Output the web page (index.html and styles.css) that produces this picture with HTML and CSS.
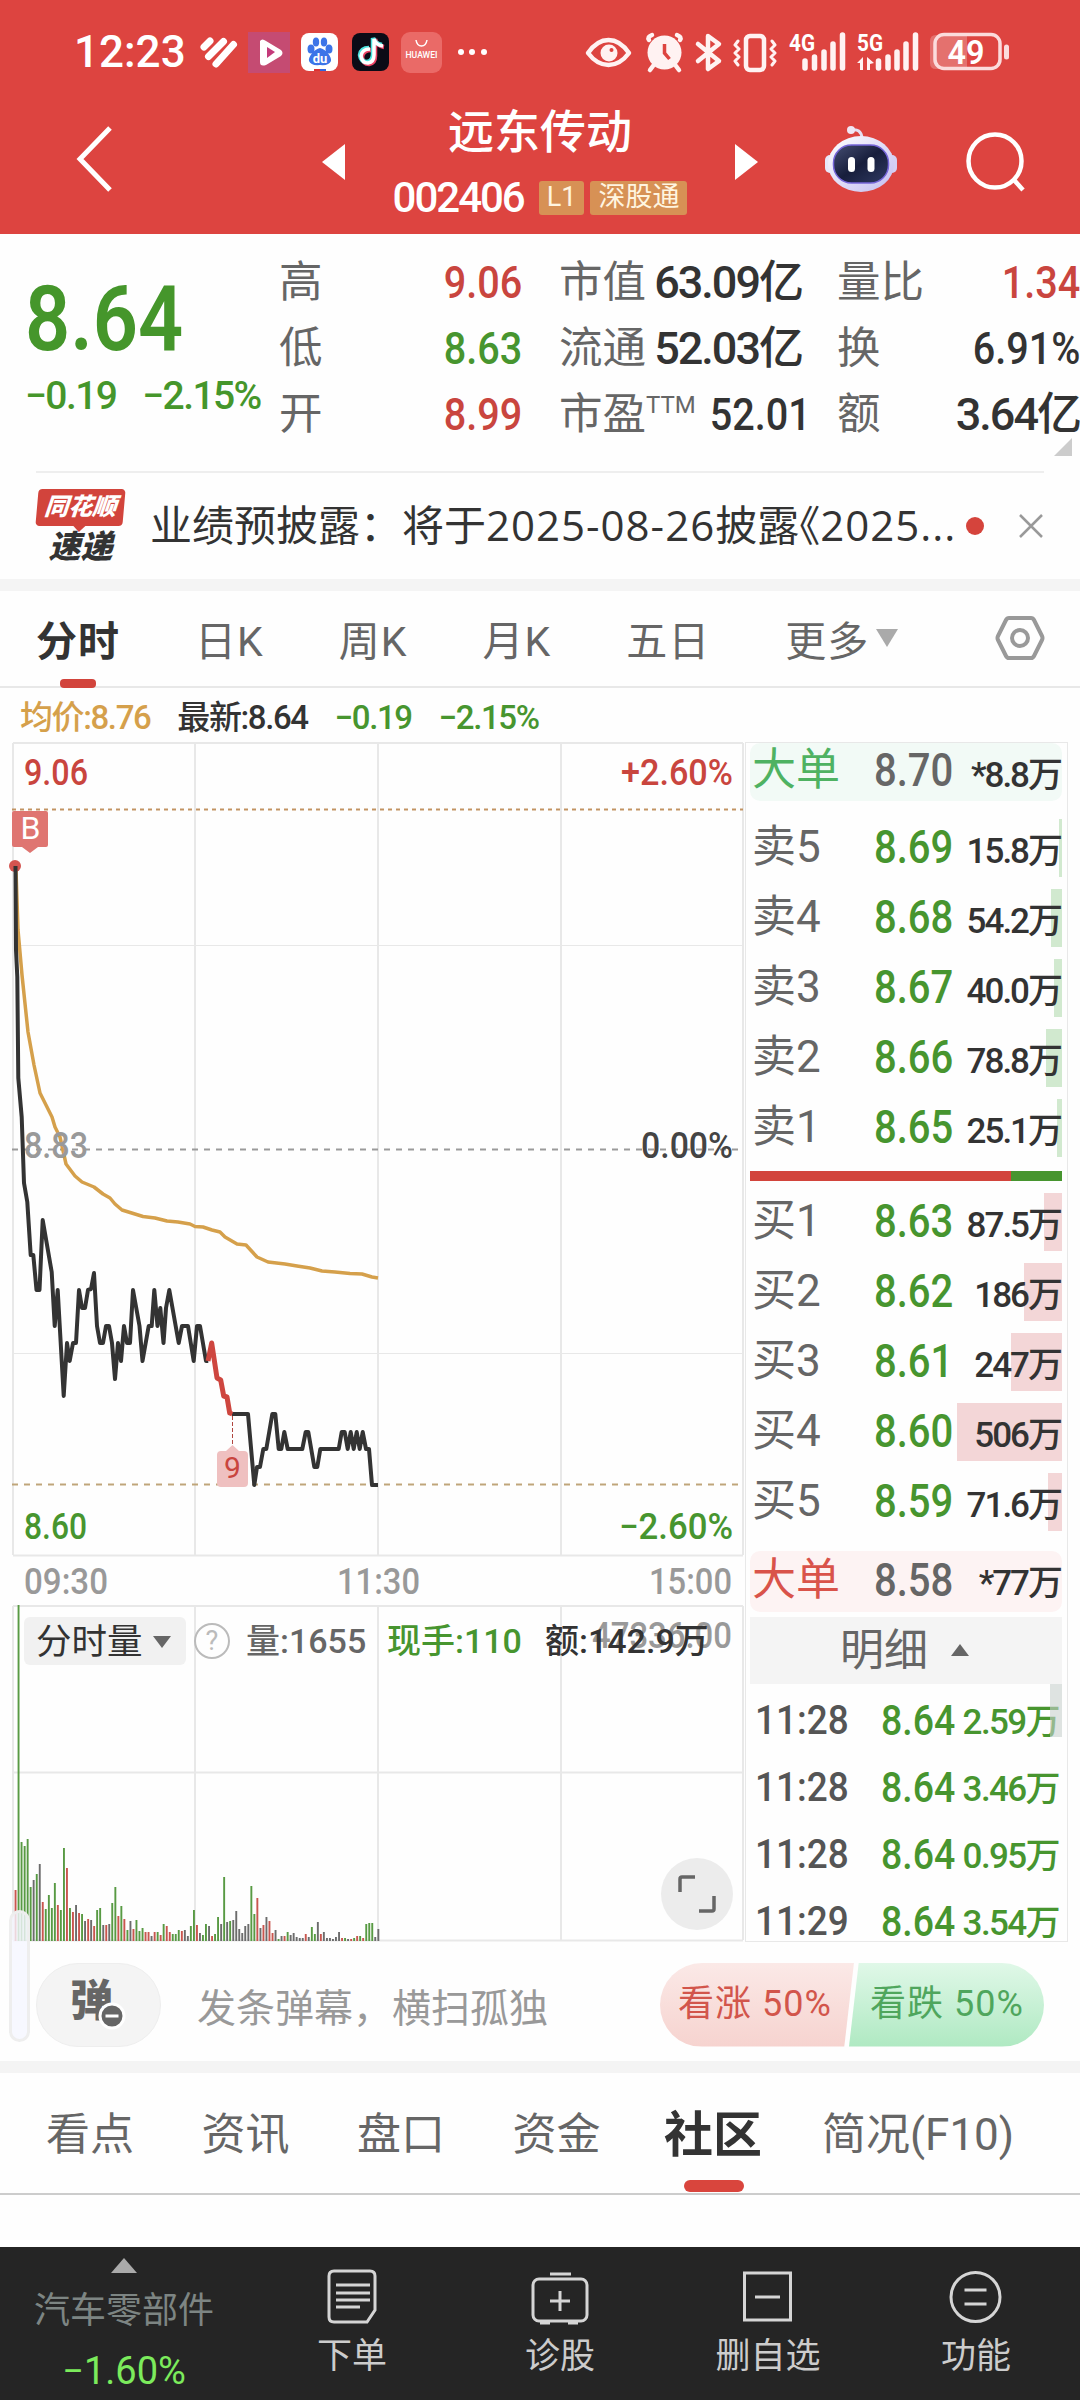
FILE: index.html
```
<!DOCTYPE html>
<html lang="zh-CN">
<head>
    <meta charset="UTF-8">
    <meta name="viewport" content="width=device-width, initial-scale=1.0">
    <title>远东传动 002406</title>
    <link rel="stylesheet" href="styles.css">
</head>
<body>
<div class="app">
    <header class="header">
        <div class="status">
            <span class="clock">12:23</span>
            <svg class="status-left" width="294" height="46" viewBox="198 28 294 46">
                <path d="M204 46L210 40M208.500 55.500L223.500 40.500M216 63L233.500 43.500" fill="none" stroke="#fff" stroke-width="7" stroke-linecap="round"/>
                <rect x="248" y="31" width="42" height="41" fill="#c54b72"/>
                <path d="M260 40 Q262 37 266 40 L281 49 Q284 52 281 55 L266 64 Q260 66 260 61Z" fill="#fff"/>
                <path d="M267 46 L275 51 L267 57Z" fill="#c43a7a"/>
                <rect x="301" y="32" width="37" height="38" rx="8" fill="#fff"/>
                <g fill="#3c74e8">
                    <ellipse cx="311" cy="48" rx="3.5" ry="4.5"/>
                    <ellipse cx="316" cy="41" rx="3.2" ry="4.5"/>
                    <ellipse cx="324" cy="41" rx="3.2" ry="4.5"/>
                    <ellipse cx="329" cy="48" rx="3.5" ry="4.5"/>
                    <path d="M320 47 C326 48 332 56 331 60 Q329 65 320 64 Q311 65 309 60 C308 56 314 48 320 47Z"/>
                </g>
                <text x="320" y="62" class="du">du</text>
                <path d="M314 68h6v2h-6z" fill="#d33"/><path d="M320 68h6v2h-6z" fill="#36d"/>
                <rect x="352" y="32" width="37" height="38" rx="8" fill="#0b0b16"/>
                <g fill="none" stroke-width="4.5">
                    <path d="M371 49 Q363 49 362 56 Q363 63 369 63 Q375 62 375 55 V38 Q377 45 384 46" stroke="#ee4466"/>
                    <path d="M369 47 Q361 47 360 54 Q361 61 367 61 Q373 60 373 53 V37 Q375 43 382 44" stroke="#4de3df"/>
                    <path d="M370 48 Q362 48 361 55 Q362 62 368 62 Q374 61 374 54 V38 Q376 44 383 45" stroke="#fff" stroke-width="3.5"/>
                </g>
                <rect x="401" y="31" width="41" height="41" rx="9" fill="#ea6a67"/>
                <path d="M416 39 Q417 45 421.500 45 Q426 45 427 39" fill="none" stroke="#fff" stroke-width="1.500"/>
                <text x="421.500" y="57" class="huawei" textLength="32" lengthAdjust="spacingAndGlyphs">HUAWEI</text>
                <g fill="#fff"><circle cx="461" cy="51" r="3"/><circle cx="472" cy="51" r="3"/><circle cx="484" cy="51" r="3"/></g>
            </svg>
            <svg class="status-right" width="426" height="48" viewBox="585 27 426 48">
                <g fill="none" stroke="#fff2f2" stroke-width="4.500" stroke-linecap="round" stroke-linejoin="round">
                    <path d="M588 52 Q597 39 608.500 39 Q620 39 629 52 Q620 64 608.500 64 Q597 64 588 52Z"/>
                    <path d="M698 43 L719 60 L708 68 V35 L719 43 L698 60"/>
                    <rect x="746" y="35" width="18" height="34" rx="4"/>
                    <path d="M738 40l-3 4 4 4-4 4 4 4-4 4 3 4M772 40l3 4-4 4 4 4-4 4 4 4-3 4" stroke-width="3"/>
                    <path d="M649 39 Q647 36 652 34M680 39 Q682 36 677 34M653 65l-3 4M676 65l3 4"/>
                </g>
                <circle cx="609" cy="52" r="8.500" fill="#fff2f2"/><circle cx="611.500" cy="49" r="2" fill="#dd4440"/>
                <circle cx="664.500" cy="51.500" r="17" fill="#fff2f2"/>
                <path d="M664.500 43v9l5 6" fill="none" stroke="#dd4440" stroke-width="3.500"/>
                <text x="789" y="50" class="net" textLength="26" lengthAdjust="spacingAndGlyphs">4G</text>
                <text x="857" y="50" class="net" textLength="26" lengthAdjust="spacingAndGlyphs">5G</text>
                <path d="M805 60v7M814.500 56v11M824 51v16M833 43v24M842.500 34v33M878.500 60v7M888 56v11M897 51v16M906 43v24M915.500 34v33" stroke="#fff2f2" stroke-width="5.500" stroke-linecap="round"/>
                <path d="M857 62l6-6v13h-3v-7zM867 56l7 6-4 1v6h-3z" fill="#fff2f2"/>
                <path d="M936 34h31v34h-31q-6 0-6-6v-22q0-6 6-6z" fill="#e4716e"/>
                <rect x="935" y="33.500" width="65" height="34" rx="9" fill="none" stroke="#fbdcdc" stroke-width="3.500"/>
                <path d="M1006.500 46v10" stroke="#fbdcdc" stroke-width="5" stroke-linecap="round"/>
                <text x="966" y="63" class="batt" textLength="37" lengthAdjust="spacingAndGlyphs">49</text>
            </svg>
        </div>
        <div class="titlebar">
            <svg class="back" width="40" height="70" viewBox="0 0 40 70"><path d="M36 4 L6 35 L36 66"/></svg>
            <i class="tri-left"></i>
            <div class="title">
                <h1>远东传动</h1>
                <div class="code"><span>002406</span><b>L1</b><b>深股通</b></div>
            </div>
            <i class="tri-right"></i>
            <svg class="robot" width="74" height="68" viewBox="824 125 74 68">
                <defs>
                    <linearGradient id="shell" x1="0" y1="0" x2="1" y2="1"><stop offset="0" stop-color="#fff"/><stop offset="1" stop-color="#c3bdf0"/></linearGradient>
                    <linearGradient id="face" x1="0" y1="0" x2="1" y2="1"><stop offset="0" stop-color="#454e72"/><stop offset=".5" stop-color="#171e3c"/><stop offset="1" stop-color="#303a62"/></linearGradient>
                </defs>
                <path d="M851 130 Q861 128 862 138" fill="none" stroke="#e6dff2" stroke-width="3"/>
                <circle cx="851" cy="130" r="4" fill="#f0e6f4"/>
                <rect x="825" y="155" width="12" height="18" rx="5" fill="#e8e8fa"/>
                <rect x="885" y="155" width="12" height="18" rx="5" fill="#d5d0f3"/>
                <ellipse cx="861" cy="164" rx="33" ry="28" fill="url(#shell)"/>
                <rect x="833.500" y="145" width="55" height="38" rx="18" fill="url(#face)" stroke="#7565d8" stroke-width="1.500"/>
                <rect x="848" y="157" width="7" height="15" rx="3.500" fill="#fff"/><rect x="867.500" y="157" width="7" height="15" rx="3.500" fill="#fff"/>
            </svg>
            <svg class="search" width="60" height="60" viewBox="0 0 60 60"><circle cx="29" cy="29" r="26.500"/><path d="M48 48 L57 58"/></svg>
        </div>
    </header>

    <section class="quote">
        <div class="price">
            <div class="last">8.64</div>
            <div class="change"><span>−0.19</span><span>−2.15%</span></div>
        </div>
        <dl class="col col-a">
            <div><dt>高</dt><dd class="n red">9.06</dd></div>
            <div><dt>低</dt><dd class="n green">8.63</dd></div>
            <div><dt>开</dt><dd class="n red">8.99</dd></div>
        </dl>
        <dl class="col col-b">
            <div><dt>市值</dt><dd>63.09亿</dd></div>
            <div><dt>流通</dt><dd>52.03亿</dd></div>
            <div><dt>市盈<sup>TTM</sup></dt><dd class="n">52.01</dd></div>
        </dl>
        <dl class="col col-c">
            <div><dt>量比</dt><dd class="n red">1.34</dd></div>
            <div><dt>换</dt><dd class="n">6.91%</dd></div>
            <div><dt>额</dt><dd>3.64亿</dd></div>
        </dl>
        <i class="corner"></i>
    </section>

    <section class="news">
        <div class="news-logo">
            <span class="logo-top">同花顺</span>
            <span class="logo-bottom">速递</span>
        </div>
        <p>业绩预披露：将于<span class="lat">2025-08-26</span>披露<span class="quote-mark">《</span><span class="lat">2025...</span></p>
        <i class="dot"></i>
        <svg class="close" width="26" height="26" viewBox="0 0 26 26"><path d="M2 2L24 24M24 2L2 24"/></svg>
    </section>

    <nav class="periods">
        <span class="on">分时</span><span>日K</span><span>周K</span><span>月K</span><span>五日</span><span class="more">更多<i></i></span>
        <svg width="50" height="46" viewBox="0 0 50 46"><path d="M14 3h22q2 0 3 2l8 16q1 2 0 4l-8 16q-1 2-3 2h-22q-2 0-3-2l-8-16q-1-2 0-4l8-16q1-2 3-2z"/><circle cx="25" cy="23" r="8"/></svg>
    </nav>

    <div class="legend">
        <span class="gold">均价:8.76</span><span>最新:8.64</span><span class="green">−0.19</span><span class="green">−2.15%</span>
    </div>

    <main class="market">
        <div class="charts">
            <svg width="745" height="1200" viewBox="0 742 745 1200">
                <g class="grid">
                    <path d="M13 743H743M13 1555.500H743M13 1606H743M13 1772.500H743M13 1940.500H743"/>
                    <path d="M13 945.500H743M13 1353.500H743" stroke-width="1"/>
                    <path d="M13 743V1555M195 743V1555M378 743V1555M561 743V1555M743 743V1555"/>
                    <path d="M13 1606V1940M195 1606V1940M378 1606V1940M561 1606V1940M743 1606V1940"/>
                </g>
                <path d="M12 809.500H743" stroke="#c29362" stroke-width="2" stroke-dasharray="4 4"/>
                <path d="M12 1149.500H743" stroke="#9a9a9a" stroke-width="2" stroke-dasharray="6 6"/>
                <path d="M12 1484.500H743" stroke="#bfa57a" stroke-width="2" stroke-dasharray="6 6"/>
                <polyline class="avg" points="16,870 18,930 22,975 28,1032 34,1065 40,1093 46,1105 52,1117 55,1127 60,1137 66,1164 75,1176 82,1182 94,1187 103,1194 110,1198 115,1204 122,1210 143,1216.500 155,1218 167,1221 178,1222 190,1224 195,1226.500 203,1227 212,1230 220,1232 225,1237 237,1244 246,1245 257,1257 268,1262 285,1264 297,1266 310,1268 322,1271 335,1272 350,1273.500 362,1274 372,1277 378,1278"/>
                <circle cx="15" cy="866" r="6" fill="#d45450"/>
                <polyline class="line" points="15.500,866 16,950 17.300,977 18.300,1078 21.700,1117 24,1183 27.300,1202 30.700,1255 33.300,1255 36.500,1290 39.500,1290 42.700,1220 51.700,1272 54.700,1326 57.700,1290 63.700,1396 67,1343 69.700,1361 73,1343 76,1343 79,1290 82,1308 85,1308 88,1290 91,1289 94,1273 97,1326 100,1343 103,1343 106,1326 109,1326 112,1343 115,1379 118,1343 121,1361 124,1326 127,1343 130,1343 133,1290 139.500,1326 142.500,1361 148.700,1326 151.700,1326 154.300,1290 157.500,1326 160.300,1308 163.500,1343 166,1308 169.300,1290 178.700,1343 182,1326 188,1326 193.700,1361 197,1326 200,1326 206,1361 208.300,1361"/>
                <polyline class="line" points="232,1414 248,1414 254.300,1485 257,1467 260,1467 263.300,1449 266.300,1449 272.300,1414 275.300,1414 278.700,1449 281.300,1449 284.300,1432 287.700,1449 302.300,1449 305.700,1432 308.300,1432 314.300,1467 317.300,1467 320.300,1449 338.700,1449 341.700,1432 344.700,1432 347.700,1449 350.700,1432 353.700,1449 356.700,1432 359.700,1449 362.700,1432 366,1449 369,1449 372,1485 378,1485"/>
                <polyline class="line drop" points="208,1361 211.700,1343 217,1378 220.700,1380 223.700,1396 227,1397 229.700,1413 232.300,1414"/>
                <path d="M232.500 1416V1444" stroke="#b0453f" stroke-width="1" stroke-dasharray="4 2"/>
                <path d="M221 1451h5l6.500-6 6.500 6h5q4 0 4 4v28q0 4-4 4h-23q-4 0-4-4v-28q0-4 4-4z" fill="#efc0c0"/>
                <text x="232.500" y="1478" class="mark9">9</text>
                <path d="M14 811h32q2 0 2 2v32q0 2-2 2h-8l-8 6-8-6h-8q-2 0-2-2v-32q0-2 2-2z" fill="#df7571"/>
                <text x="30.500" y="839" class="mark-b">B</text>
                <text class="ax red" x="24" y="785" textLength="64" lengthAdjust="spacingAndGlyphs">9.06</text>
                <text class="ax grey" x="24" y="1158" textLength="64" lengthAdjust="spacingAndGlyphs">8.83</text>
                <text class="ax green" x="24" y="1539" textLength="63" lengthAdjust="spacingAndGlyphs">8.60</text>
                <text class="ax red" x="621" y="785" textLength="112" lengthAdjust="spacingAndGlyphs">+2.60%</text>
                <text class="ax dark" x="641" y="1158" textLength="92" lengthAdjust="spacingAndGlyphs">0.00%</text>
                <text class="ax green" x="619" y="1539" textLength="114" lengthAdjust="spacingAndGlyphs">−2.60%</text>
                <text class="ax grey" x="24" y="1594" textLength="84" lengthAdjust="spacingAndGlyphs">09:30</text>
                <text class="ax grey" x="337" y="1594" textLength="83" lengthAdjust="spacingAndGlyphs">11:30</text>
                <text class="ax grey" x="649" y="1594" textLength="83" lengthAdjust="spacingAndGlyphs">15:00</text>
                <text class="ax grey" x="592" y="1648" textLength="140" lengthAdjust="spacingAndGlyphs">47336.00</text>
                <g id="volume"></g>
            </svg>
            <div class="vol-bar">
                <span class="pick">分时量<i></i></span><span class="help">?</span>
                <span class="v1">量:1655</span><span class="v2 green">现手:110</span><span class="v3">额:142.9万</span>
            </div>
            <div class="expand"><svg width="38" height="38" viewBox="0 0 38 38"><path d="M2 17V4q0-2 2-2h13M36 21v13q0 2-2 2H21"/></svg></div>
        </div>

        <aside class="book">
            <div class="row big sell"><span>大单</span><b>8.70</b><em>*8.8万</em></div>
            <div class="levels">
                <div class="row s"><span>卖5</span><b>8.69</b><em>15.8万</em><i style="width:3px"></i></div>
                <div class="row s"><span>卖4</span><b>8.68</b><em>54.2万</em><i style="width:11px"></i></div>
                <div class="row s"><span>卖3</span><b>8.67</b><em>40.0万</em><i style="width:8px"></i></div>
                <div class="row s"><span>卖2</span><b>8.66</b><em>78.8万</em><i style="width:16px"></i></div>
                <div class="row s"><span>卖1</span><b>8.65</b><em>25.1万</em><i style="width:5px"></i></div>
            </div>
            <div class="ratio"><i style="width:261px"></i></div>
            <div class="levels">
                <div class="row"><span>买1</span><b>8.63</b><em>87.5万</em><i style="width:18px"></i></div>
                <div class="row"><span>买2</span><b>8.62</b><em>186万</em><i style="width:38px"></i></div>
                <div class="row"><span>买3</span><b>8.61</b><em>247万</em><i style="width:51px"></i></div>
                <div class="row"><span>买4</span><b>8.60</b><em>506万</em><i style="width:105px"></i></div>
                <div class="row"><span>买5</span><b>8.59</b><em>71.6万</em><i style="width:14px"></i></div>
            </div>
            <div class="row big buy"><span>大单</span><b>8.58</b><em>*77万</em></div>
            <div class="detail-head">明细<i></i></div>
            <div class="details">
                <div><span>11:28</span><b>8.64</b><em>2.59万</em></div>
                <div><span>11:28</span><b>8.64</b><em>3.46万</em></div>
                <div><span>11:28</span><b>8.64</b><em>0.95万</em></div>
                <div><span>11:29</span><b>8.64</b><em>3.54万</em></div>
                <i class="thumb"></i>
            </div>
        </aside>
    </main>

    <section class="danmu">
        <i class="handle"></i>
        <div class="toggle">弹<svg width="28" height="28" viewBox="0 0 28 28"><circle cx="14" cy="14" r="12"/><path d="M7.500 14h13"/></svg></div>
        <span class="hint">发条弹幕，横扫孤独</span>
        <div class="vote"><span class="up">看涨 50%</span><span class="down">看跌 50%</span></div>
    </section>

    <nav class="pages">
        <span>看点</span><span>资讯</span><span>盘口</span><span>资金</span><span class="on">社区</span><span>简况(F10)</span>
    </nav>

    <footer class="bottom">
        <div class="sector"><i></i><span>汽车零部件</span><b>−1.60%</b></div>
        <div class="item">
            <svg width="60" height="60" viewBox="0 0 60 60"><path d="M12 5h36q5 0 5 5v34l-8 12H12q-5 0-5-5V10q0-5 5-5z"/><path d="M14 19h34M14 27h34M14 34h34M14 41h24"/></svg>
            <span>下单</span>
        </div>
        <div class="item">
            <svg width="60" height="60" viewBox="0 0 60 60"><rect x="3" y="13" width="54" height="42" rx="6"/><path d="M20 8h21M30 25v20M20 35h20M10 57h10M38 57h10"/></svg>
            <span>诊股</span>
        </div>
        <div class="item">
            <svg width="60" height="60" viewBox="0 0 60 60"><rect x="6.500" y="7" width="46" height="47"/><path d="M17 31h25"/></svg>
            <span>删自选</span>
        </div>
        <div class="item">
            <svg width="60" height="60" viewBox="0 0 60 60"><circle cx="29.500" cy="31" r="24.500"/><path d="M18.500 24h22M18.500 38h22"/></svg>
            <span>功能</span>
        </div>
    </footer>
</div>

<script>
    // g = down minute, r = up minute, k = flat
    const volumes = "r51 g336 g99 g95 g102 g54 k61 g67 k77 r39 g32 g46 g33 g58 r36 g31 g93 r73 g33 r29 k36 r28 g27 k20 r22 k21 r15 g31 g33 k16 r16 k17 g38 g54 r25 g35 r22 g11 k20 r12 g21 g10 g13 r9 r9 k5 r9 g9 r6 g17 r15 r9 g7 g7 g11 r10 k11 k5 g15 g31 r16 k8 g6 g17 k15 r5 g7 g24 k17 g64 k19 g20 k21 k30 k12 k8 k15 k17 g55 g27 r43 k13 r16 k24 r20 r8 k11 g2 k5 r5 g9 k6 k8 k4 k3 k3 r7 k4 g14 g7 k19 r7 k9 k3 k3 k2 k4 k9 r3 g3 k2 r2 g3 r5 g5 r3 g17 g18 g18 k4 k12";
    const colors = { g: "#589a43", r: "#c9564f", k: "#6c6c6c" };
    document.getElementById("volume").innerHTML = volumes.split(" ").map((v, i) => {
        const h = Number(v.slice(1));
        return `<rect x="${(14.6 + i * 3.023).toFixed(1)}" y="${1941 - h}" width="1.9" height="${h}" fill="${colors[v[0]]}"/>`;
    }).join("");
</script>
</body>
</html>
```
FILE: styles.css
```
* {
    box-sizing: border-box;
}
body, h1, p, dl, dd {
    margin: 0;
}
body {
    width: 1080px;
    background: #fefefe;
    color: #333;
    font-family: Roboto, "Noto Sans CJK SC", sans-serif;
}
i, em {
    font-style: normal;
}
b {
    font-weight: 500;
}
span, b, em, dt, dd, p {
    white-space: nowrap;
}
.app {
    width: 1080px;
    height: 2400px;
    overflow: hidden;
    display: flex;
    flex-direction: column;
}
.red { color: #c9453e; fill: #c9453e; }
.green { color: #47952f; fill: #47952f; }
.grey { fill: #999; }
.dark { fill: #444; }
.gold { color: #d5a04b; }

/* header */
.header {
    height: 234px;
    background: #dd4440;
    color: #fff;
}
.status {
    height: 104px;
    display: flex;
    align-items: center;
    padding: 0 69px 0 74px;
}
.clock {
    width: 124px;
    font-size: 44px;
    font-weight: 500;
}
.status-right {
    margin-left: auto;
}
.status text {
    text-anchor: middle;
    fill: #fff;
}
.status text.net {
    font-size: 24px;
    font-weight: 700;
    text-anchor: start;
}
.status text.batt {
    font-size: 34px;
    font-weight: 600;
}
.du { font-size: 13px; font-weight: 700; }
.huawei { font-size: 9px; font-weight: 500; }
.titlebar {
    height: 130px;
    display: flex;
    align-items: flex-start;
    padding-left: 74px;
}
.titlebar svg, .titlebar i {
    flex: none;
}
.back {
    margin-top: 20px;
    margin-right: 208px;
    fill: none;
    stroke: #fff;
    stroke-width: 5;
}
.tri-left, .tri-right {
    margin-top: 40px;
    border: 18px solid transparent;
}
.tri-left {
    border-left: 0;
    border-right: 23px solid #fff;
}
.tri-right {
    border-right: 0;
    border-left: 23px solid #fff;
}
.title {
    width: 390px;
    text-align: center;
}
.title h1 {
    margin-top: -5px;
    font-size: 46px;
    font-weight: 500;
    line-height: 66px;
}
.code {
    display: flex;
    justify-content: center;
    align-items: center;
    height: 66px;
    line-height: 66px;
    font-size: 42px;
    font-weight: 500;
}
.code span {
    margin-right: 15px;
    letter-spacing: -2px;
}
.code b {
    height: 34px;
    padding: 0 8px;
    margin-right: 6px;
    border-radius: 3px;
    background: #d79155;
    color: #fff5e0;
    font-size: 27px;
    font-weight: 400;
    line-height: 33px;
}
.code b:last-child {
    margin-right: 0;
}
.robot {
    margin: 21px 68px 0 66px;
}
.search {
    margin-top: 28px;
    fill: none;
    stroke: #fff;
    stroke-width: 4.5;
}

/* quote */
.quote {
    position: relative;
    height: 237px;
    display: flex;
    padding: 15px 0 0 25px;
}
.price {
    width: 254px;
}
.last {
    margin-top: 21px;
    font-size: 91px;
    font-weight: 600;
    line-height: 98px;
    color: #45962b;
    transform: scaleX(.87);
    transform-origin: left;
}
.change {
    display: flex;
    gap: 26px;
    color: #45962b;
    font-size: 39px;
    font-weight: 500;
    line-height: 56px;
    letter-spacing: -1.6px;
}
.col > div {
    display: flex;
    justify-content: space-between;
    height: 66px;
    line-height: 68px;
    font-size: 43.5px;
}
.col dt {
    color: #666;
}
.col dd {
    font-size: 45px;
    font-weight: 500;
    letter-spacing: -2px;
}
/* narrow digits */
.col dd.n {
    letter-spacing: 0;
    transform: scaleX(.88);
    transform-origin: right;
}
.col-a { width: 243px; }
.col-b { width: 243px; margin-left: 37px; }
.col-c { width: 243px; margin-left: 35px; }
.col sup {
    font-size: 24px;
    line-height: 0;
    vertical-align: 16px;
}
.corner {
    position: absolute;
    right: 8px;
    bottom: 15px;
    border-left: 18px solid transparent;
    border-bottom: 18px solid #ccc;
}

/* news */
.news {
    height: 108px;
    margin: 0 36px;
    border-top: 2px solid #eee;
    display: flex;
    align-items: center;
}
.news-logo {
    width: 87px;
    margin: 0 26px 0 1px;
    font-style: italic;
    font-weight: 900;
    text-align: center;
    flex: none;
}
.logo-top {
    position: relative;
    display: block;
    height: 37px;
    border-radius: 4px;
    background: #d2443c;
    color: #fff;
    font-size: 24px;
    line-height: 36px;
    transform: skewX(-5deg);
}
.logo-top::after {
    content: "";
    position: absolute;
    left: 38px;
    top: 37px;
    border: 6px solid transparent;
    border-top-color: #d2443c;
    border-bottom: 0;
}
.logo-bottom {
    display: block;
    margin-top: 4px;
    font-size: 32px;
    line-height: 34px;
}
.news p {
    width: 806px;
    font-size: 42px;
    line-height: 60px;
}
.lat {
    font-family: "Open Sans", sans-serif;
    letter-spacing: 1px;
    font-size: 42px;
}
.quote-mark {
    margin-left: -21px;
}
.dot {
    width: 18px;
    height: 18px;
    margin-left: 10px;
    border-radius: 9px;
    background: #d5443c;
}
.close {
    margin-left: auto;
    fill: none;
    stroke: #999;
    stroke-width: 2.5;
}

/* period tabs */
.periods {
    height: 109px;
    border-top: 12px solid #f4f4f4;
    border-bottom: 2px solid #e8e8e8;
    display: flex;
    align-items: center;
    padding: 0 35px 2px 36px;
    font-size: 41px;
    color: #666;
}
.periods span {
    margin-right: 75px;
    letter-spacing: 1px;
}
.periods .on {
    position: relative;
    color: #333;
    font-weight: 700;
}
.periods .on::after {
    content: "";
    position: absolute;
    left: 24px;
    bottom: -20px;
    width: 36px;
    height: 9px;
    border-radius: 4px;
    background: #d2443c;
}
.periods .more {
    display: flex;
    align-items: center;
    margin: 0;
}
.more i {
    margin-left: 7px;
    border: 11px solid transparent;
    border-top: 18px solid #aaa;
    border-bottom: 0;
}
.periods svg {
    margin-left: auto;
    fill: none;
    stroke: #999;
    stroke-width: 4;
}

.legend {
    height: 54px;
    display: flex;
    padding-left: 20px;
    gap: 27px;
    font-size: 33px;
    font-weight: 500;
    line-height: 59px;
    letter-spacing: -1.4px;
}

/* market */
.market {
    height: 1200px;
    display: flex;
}
.charts {
    position: relative;
    width: 745px;
    flex: none;
}
.charts > svg {
    display: block;
}
.grid {
    fill: none;
    stroke: #e8e8e8;
    stroke-width: 2;
}
.avg, .line {
    fill: none;
    stroke: #d5a04b;
    stroke-width: 3.5;
    stroke-linejoin: round;
}
.line {
    stroke: #333;
    stroke-width: 4;
}
.line.drop {
    stroke: #ce463f;
    stroke-width: 5;
}
.ax {
    font-size: 36px;
    font-weight: 500;
}
.mark9, .mark-b {
    font-size: 30px;
    text-anchor: middle;
    fill: #c9453e;
}
.mark-b {
    font-size: 32px;
    fill: #fff;
}
.vol-bar {
    position: absolute;
    left: 24px;
    top: 875px;
    display: flex;
    align-items: center;
    height: 48px;
    font-size: 34px;
    font-weight: 500;
    line-height: 50px;
}
.pick {
    width: 162px;
    height: 48px;
    padding-left: 12px;
    border-radius: 6px;
    background: #f1f1f1;
    font-size: 35.5px;
    font-weight: 400;
}
.pick i {
    display: inline-block;
    margin: 0 0 6px 10px;
    border: 9px solid transparent;
    border-top: 12px solid #666;
    border-bottom: 0;
}
.help {
    width: 36px;
    height: 36px;
    margin: 0 16px 0 8px;
    border: 2px solid #bbb;
    border-radius: 18px;
    color: #bbb;
    font-size: 27px;
    font-weight: 400;
    line-height: 33px;
    text-align: center;
}
.v1 {
    width: 141px;
    color: #666;
}
.v2 {
    width: 158px;
}
.expand {
    position: absolute;
    left: 661px;
    top: 1116px;
    width: 72px;
    height: 72px;
    border-radius: 36px;
    background: #ececec;
    display: flex;
    align-items: center;
    justify-content: center;
    fill: none;
    stroke: #666;
    stroke-width: 3.5;
}

/* order book */
.book {
    width: 323px;
    border: 1px solid #e8e8e8;
    padding: 0 5px 0 4px;
}
.row, .details > div {
    position: relative;
    display: grid;
    grid-template-columns: 122px 1fr auto;
    height: 58px;
    padding: 0 1px 0 2px;
    line-height: 57px;
    font-size: 44px;
    color: #666;
}
.row b, .details b {
    width: 80px;
    color: #47952f;
    transform: scaleX(.87);
    transform-origin: left;
}
.row b {
    font-size: 46px;
}
.row em {
    position: relative;
    z-index: 1;
    color: #333;
    font-size: 35px;
    font-weight: 500;
    line-height: 65px;
    letter-spacing: -2px;
}
.row i {
    position: absolute;
    right: 0;
    top: 0;
    height: 58px;
    background: #f3d6d7;
}
.row.s i {
    background: #d1e9cf;
}
.row.big {
    border-radius: 10px;
    color: #4fb262;
    background: #f2faf6;
    line-height: 54px;
}
.row.big b {
    color: #666;
}
.row.big.buy {
    height: 61px;
    color: #d9534a;
    background: #fdf3f3;
    line-height: 58px;
}
.levels {
    display: grid;
    grid-template-columns: minmax(0, 1fr);
    gap: 12px;
    padding-top: 18px;
}
.ratio {
    height: 10px;
    margin: 14px 0 -6px;
    background: #47952f;
}
.ratio i {
    display: block;
    height: 10px;
    background: #d2443c;
}
.row.buy {
    margin-top: 20px;
}
.detail-head {
    height: 67px;
    margin-top: 5px;
    padding-left: 90px;
    background: #f4f4f4;
    color: #666;
    font-size: 44px;
    line-height: 68px;
}
.detail-head i {
    display: inline-block;
    margin: 0 0 10px 23px;
    border: 9px solid transparent;
    border-bottom: 12px solid #666;
    border-top: 0;
}
.details {
    position: relative;
    height: 256px;
    overflow: hidden;
}
.details > div {
    height: 67px;
    line-height: 73px;
    font-size: 41px;
    color: #555;
    grid-template-columns: 126px 1fr auto;
    padding: 0 3px 0 5px;
}
.details span {
    font-weight: 500;
    transform: scaleX(.9);
    transform-origin: left;
}
.details b {
    font-size: 43px;
}
.details em {
    color: #47952f;
    font-size: 35px;
    font-weight: 500;
    letter-spacing: -1.6px;
    line-height: 77px;
}
.thumb {
    position: absolute;
    right: 0;
    top: 0;
    width: 12px;
    height: 53px;
    background: rgba(200, 208, 205, .6);
}

/* comment bar */
.danmu {
    position: relative;
    height: 131px;
    border-bottom: 12px solid #f4f4f4;
    display: flex;
    align-items: center;
    padding: 6px 36px 0;
    flex: none;
}
.handle {
    position: absolute;
    left: 9px;
    top: -32px;
    width: 21px;
    height: 132px;
    border: 3px solid #eee;
    border-radius: 11px;
    background: rgba(245, 246, 255, .8);
}
.toggle {
    position: relative;
    width: 125px;
    height: 84px;
    padding-left: 33px;
    margin-right: 36px;
    border: 1px solid #eee;
    border-radius: 42px;
    background: #f4f4f4;
    color: #666;
    font-size: 43px;
    font-weight: 900;
    line-height: 74px;
}
.toggle svg {
    position: absolute;
    left: 61px;
    top: 38px;
    fill: #666;
    stroke: #fff;
    stroke-width: 3;
}
.hint {
    color: #999;
    font-size: 39px;
}
.vote {
    display: flex;
    width: 384px;
    height: 84px;
    margin-left: auto;
    border-radius: 42px;
    overflow: hidden;
    font-size: 36px;
    line-height: 82px;
    letter-spacing: 1px;
}
.up, .down {
    width: 194px;
    padding-left: 18px;
    background: linear-gradient(#fbe9e7, #f6d3cf);
    clip-path: polygon(0 0, 100% 0, 95% 100%, 0 100%);
    color: #d2554b;
}
.down {
    width: 195px;
    margin-left: -5px;
    padding-left: 21px;
    background: linear-gradient(#e0f8e8, #afe9c2);
    clip-path: polygon(5% 0, 100% 0, 100% 100%, 0 100%);
    color: #4fa65d;
}

/* page tabs */
.pages {
    height: 122px;
    border-bottom: 2px solid #ccc;
    display: flex;
    align-items: center;
    padding: 0 0 5px 46px;
    color: #666;
    font-size: 44px;
    flex: none;
}
.pages span {
    margin-right: 67.500px;
}
.pages .on {
    position: relative;
    margin: 0 60px 0 -4px;
    color: #333;
    font-size: 49px;
    font-weight: 700;
}
.pages .on::after {
    content: "";
    position: absolute;
    left: 20px;
    bottom: -26px;
    width: 60px;
    height: 12px;
    border-radius: 6px;
    background: #d9453d;
}

/* bottom bar */
.bottom {
    height: 153px;
    margin-top: auto;
    display: flex;
    background: #252525;
    color: #ccc;
    font-size: 35px;
    text-align: center;
}
.sector {
    width: 248px;
    display: flex;
    flex-direction: column;
    align-items: center;
    color: #7d8583;
}
.sector i {
    margin-top: 11px;
    border: 13px solid transparent;
    border-top: 0;
    border-bottom: 15px solid #aaa;
}
.sector span {
    line-height: 50px;
    margin-top: 13px;
    font-size: 36px;
}
.sector b {
    color: #7ceb5c;
    font-size: 38px;
    font-weight: 400;
    line-height: 71px;
}
.item {
    width: 208px;
    padding-top: 19px;
}
.item svg {
    display: block;
    margin: 0 auto;
    fill: none;
    stroke: #d5d5d5;
    stroke-width: 3;
}
.item span {
    display: block;
    margin-top: 6px;
    line-height: 50px;
}
```
